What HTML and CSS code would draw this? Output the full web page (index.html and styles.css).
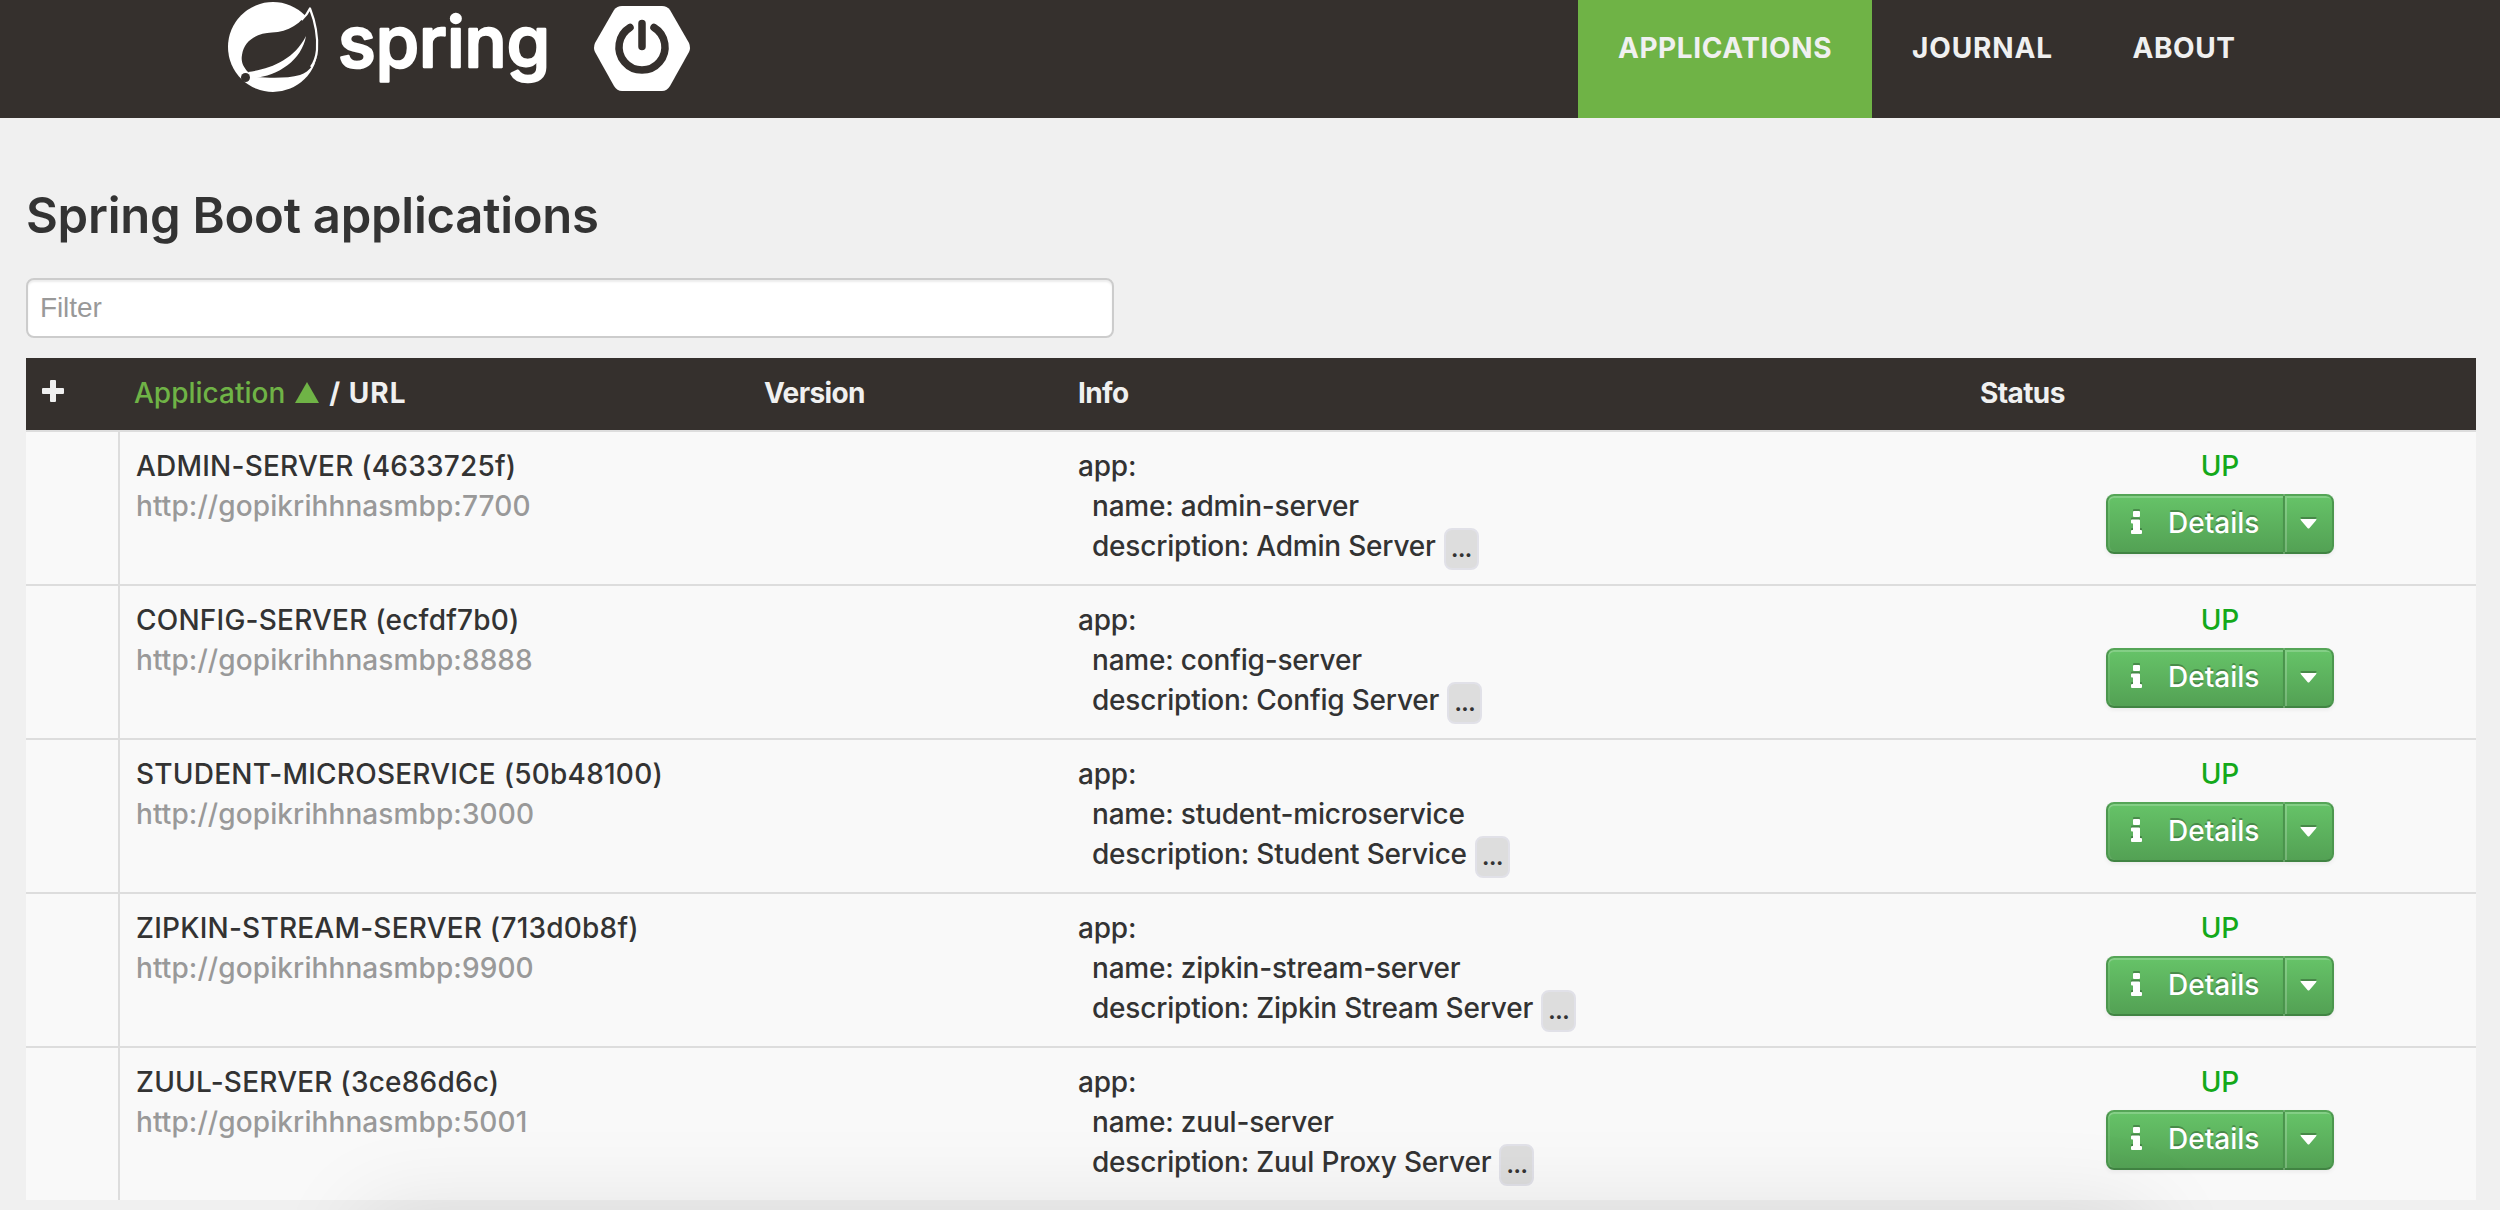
FILE: index.html
```html
<!DOCTYPE html>
<html lang="en">
<head>
<meta charset="utf-8">
<title>Spring Boot Admin</title>
<link rel="stylesheet" href="styles.css">
</head>
<body>
<svg class="sprite" width="0" height="0">
  <symbol id="icon-info" viewBox="0 0 11 23"><path d="M3 0h5q1 0 1 1v4q0 1-1 1H3q-1 0-1-1V1q0-1 1-1zM1 8.500h7q1 0 1 1V19h1q1 0 1 1v2q0 1-1 1H1q-1 0-1-1v-2q0-1 1-1h1v-6.500H1q-1 0-1-1v-2q0-1 1-1z"/></symbol>
  <symbol id="icon-caret" viewBox="0 0 16 10"><path d="M0 0h16q0 1-1 2L9 9q-1 1-2 0L1 2Q0 1 0 0z"/></symbol>
</svg>
<header class="header">
  <div class="header-inner">
    <div class="brand">
      <svg class="logo-spring" width="326" height="100" viewBox="0 0 326 100" role="img" aria-label="spring">
        <circle class="light" cx="48" cy="47" r="45"/>
        <path class="dark" d="M85 8C91 24 93 36 93 48C92 62 85 72 75 75C63 78.500 45 78 31 77L23 72C17 66 16 60 17 55C19 40 33 33 47 32.500C63 32 77 24 85 8Z"/>
        <path class="edge" d="M76.500 20Q82 15 85 8.500C91 24 93 36 92 50Q91 60 86 67"/>
        <path class="light" d="M23 72C45 69 69 60 81 36C77 60 53 76 29 78Z"/>
        <circle class="dark" cx="20.500" cy="77.500" r="4.500"/>
        <text class="wordmark" x="113" y="66.500" textLength="212" lengthAdjust="spacingAndGlyphs">spring</text>
      </svg>
      <svg class="logo-boot" width="114" height="100" viewBox="0 0 114 100">
        <path class="light" d="M37 6H77Q82 6 85 10L104 43Q106 48 104 52L85 86Q82 91 77 91H37Q32 91 29 86L10 52Q8 48 10 43L29 10Q32 6 37 6Z"/>
        <path class="power" d="M45 27.500A23 23 0 1 0 69 27.500M57 23.500V46.500"/>
      </svg>
    </div>
    <nav class="nav">
      <a class="nav-item nav-apps active">APPLICATIONS</a>
      <a class="nav-item nav-journal">JOURNAL</a>
      <a class="nav-item nav-about">ABOUT</a>
    </nav>
  </div>
</header>
<main class="content">
  <h1 class="title">Spring Boot applications</h1>
  <input class="filter" type="text" placeholder="Filter">
  <section class="table">
    <div class="row head">
      <div class="cell"><svg class="plus" width="22" height="22" viewBox="0 0 22 22"><path d="M9 0h4q1 0 1 1v7h7q1 0 1 1v4q0 1-1 1h-7v7q0 1-1 1H9q-1 0-1-1v-7H1q-1 0-1-1V9q0-1 1-1h7V1q0-1 1-1z"/></svg></div>
      <div class="cell sort"><span class="sorted">Application</span><svg class="sort-arrow" width="24" height="21" viewBox="0 0 24 21"><path d="M12 0L24 21H0z"/></svg><span class="by-url">/ URL</span></div>
      <div class="cell">Version</div>
      <div class="cell">Info</div>
      <div class="cell">Status</div>
    </div>
    <div class="row">
      <div class="cell"></div>
      <div class="cell app"><div>ADMIN-SERVER (4633725f)</div><div class="url">http://gopikrihhnasmbp:7700</div></div>
      <div class="cell"></div>
      <div class="cell info"><div>app:</div><div class="sub">name: admin-server</div><div class="sub">description: Admin Server<span class="more">...</span></div></div>
      <div class="cell status"><div class="up">UP</div><div class="group"><button class="btn details"><svg class="glyph" width="11" height="23"><use href="#icon-info"/></svg>Details</button><button class="btn drop"><svg class="glyph" width="17" height="10"><use href="#icon-caret"/></svg></button></div></div>
    </div>
    <div class="row">
      <div class="cell"></div>
      <div class="cell app"><div>CONFIG-SERVER (ecfdf7b0)</div><div class="url">http://gopikrihhnasmbp:8888</div></div>
      <div class="cell"></div>
      <div class="cell info"><div>app:</div><div class="sub">name: config-server</div><div class="sub">description: Config Server<span class="more">...</span></div></div>
      <div class="cell status"><div class="up">UP</div><div class="group"><button class="btn details"><svg class="glyph" width="11" height="23"><use href="#icon-info"/></svg>Details</button><button class="btn drop"><svg class="glyph" width="17" height="10"><use href="#icon-caret"/></svg></button></div></div>
    </div>
    <div class="row">
      <div class="cell"></div>
      <div class="cell app"><div>STUDENT-MICROSERVICE (50b48100)</div><div class="url">http://gopikrihhnasmbp:3000</div></div>
      <div class="cell"></div>
      <div class="cell info"><div>app:</div><div class="sub">name: student-microservice</div><div class="sub">description: Student Service<span class="more">...</span></div></div>
      <div class="cell status"><div class="up">UP</div><div class="group"><button class="btn details"><svg class="glyph" width="11" height="23"><use href="#icon-info"/></svg>Details</button><button class="btn drop"><svg class="glyph" width="17" height="10"><use href="#icon-caret"/></svg></button></div></div>
    </div>
    <div class="row">
      <div class="cell"></div>
      <div class="cell app"><div>ZIPKIN-STREAM-SERVER (713d0b8f)</div><div class="url">http://gopikrihhnasmbp:9900</div></div>
      <div class="cell"></div>
      <div class="cell info"><div>app:</div><div class="sub">name: zipkin-stream-server</div><div class="sub">description: Zipkin Stream Server<span class="more">...</span></div></div>
      <div class="cell status"><div class="up">UP</div><div class="group"><button class="btn details"><svg class="glyph" width="11" height="23"><use href="#icon-info"/></svg>Details</button><button class="btn drop"><svg class="glyph" width="17" height="10"><use href="#icon-caret"/></svg></button></div></div>
    </div>
    <div class="row">
      <div class="cell"></div>
      <div class="cell app"><div>ZUUL-SERVER (3ce86d6c)</div><div class="url">http://gopikrihhnasmbp:5001</div></div>
      <div class="cell"></div>
      <div class="cell info"><div>app:</div><div class="sub">name: zuul-server</div><div class="sub">description: Zuul Proxy Server<span class="more">...</span></div></div>
      <div class="cell status"><div class="up">UP</div><div class="group"><button class="btn details"><svg class="glyph" width="11" height="23"><use href="#icon-info"/></svg>Details</button><button class="btn drop"><svg class="glyph" width="17" height="10"><use href="#icon-caret"/></svg></button></div></div>
    </div>
  </section>
</main>
<div class="dock-shadow"></div>
</body>
</html>
```
FILE: styles.css
```css
* { box-sizing: border-box; }
html, body { margin: 0; height: 1210px; overflow: hidden; }
body {
  background: #f0f0f0;
  color: #333;
  font: 450 28px/40px Inter, "Liberation Sans", sans-serif;
}
.sprite { position: absolute; }

.header { height: 118px; background: #35302d; }
.header-inner { display: flex; justify-content: space-between; width: 2050px; height: 100%; margin: 0 auto; }
.brand { display: flex; }
.brand svg { display: block; overflow: visible; }
.logo-boot { margin-left: 34px; }
.light { fill: #fff; }
.dark { fill: #35302d; }
.edge { fill: none; stroke: #fff; stroke-width: 2.2; stroke-linejoin: round; }
.power { fill: none; stroke: #35302d; stroke-width: 7.5; stroke-linecap: round; }
.wordmark { font: 450 70px Inter, sans-serif; fill: #fff; stroke: #fff; stroke-width: 2.5; stroke-linejoin: round; }

.nav { display: flex; }
.nav-item { padding-top: 28px; text-align: center; color: #f0f0f0; font-weight: 700; white-space: nowrap; }
.nav-apps { width: 294px; letter-spacing: .6px; }
.nav-journal { width: 221px; letter-spacing: .9px; }
.nav-about { width: 182px; letter-spacing: .6px; }
.active { background: #6fb346; }

.content { padding: 68px 24px 0 26px; }
.title { margin: 0; height: 92px; font-size: 49px; line-height: 60px; font-weight: 600; letter-spacing: -.25px; }
.filter {
  display: block; width: 1088px; height: 60px; padding: 0 12px;
  border: 2px solid #ccc; border-radius: 8px; background: #fff;
  box-shadow: inset 0 2px 2px rgba(0,0,0,.075);
  font: 28px "Liberation Sans", Arial, sans-serif; letter-spacing: -.1px; color: #555;
}
.filter::placeholder { color: #999; opacity: 1; }

.table { margin-top: 20px; }
.row {
  display: grid; grid-template-columns: 92px 630px 314px 902px 512px;
  height: 154px; border-top: 2px solid #ddd; background: #f9f9f9;
}
.cell { padding: 14px 16px 0; white-space: nowrap; }
.head { height: 72px; border-top: 0; background: #35302d; color: #f0f0f0; font-weight: 650; letter-spacing: -.6px; }
.head .cell { padding-top: 15px; }
.plus { display: block; margin-top: 7px; fill: #f0f0f0; }
.sort { display: flex; }
.sorted { color: #6fb346; font-weight: 550; letter-spacing: 0; }
.by-url { letter-spacing: 1px; }
.sort-arrow { margin: 9px 10px 0 10px; fill: #6fb346; }
.app { border-left: 2px solid #ddd; letter-spacing: .22px; }
.url { color: #999; letter-spacing: .1px; }
.info { letter-spacing: -.2px; }
.sub { padding-left: 14px; }
.more {
  display: inline-block; height: 42px; margin: 2px 0 0 8px; padding: 0 5px;
  border: 2px solid #e1e1e8; border-radius: 8px; background: #ddd;
  font-size: 26px; line-height: 36px; vertical-align: top; letter-spacing: -.9px;
}
.info > div { height: 40px; }
.status { text-align: center; }
.up { color: #14a91a; font-weight: 500; }
.group { display: flex; justify-content: center; margin-top: 8px; }
.btn {
  display: flex; align-items: center; height: 60px; margin: 0; padding: 0;
  border: 2px solid #51a351; border-color: #55a557 #4c974e #418443;
  background: linear-gradient(#66c368, #53a154);
  color: #fff; font: 500 28px/40px Inter, sans-serif; text-shadow: 0 -2px 0 rgba(0,0,0,.25);
  box-shadow: inset 0 2px 0 rgba(255,255,255,.2), inset 2px 0 0 rgba(255,255,255,.08), 0 2px 4px rgba(0,0,0,.06);
}
.details { width: 178px; padding: 0 0 3px 23px; gap: 26px; border-radius: 8px 0 0 8px; border-right-width: 1px; }
.drop { width: 50px; padding-left: 15px; border-left-width: 1px; border-radius: 0 8px 8px 0; box-shadow: inset 2px 2px 0 rgba(255,255,255,.2), 0 2px 4px rgba(0,0,0,.06); }
.glyph { fill: #fff; filter: drop-shadow(0 -2px 0 rgba(0,0,0,.25)); }

/* soft shade along the bottom edge of the window */
.dock-shadow { position: absolute; left: 0; bottom: 0; width: 100%; height: 90px; overflow: hidden; pointer-events: none; }
.dock-shadow::before {
  content: ""; position: absolute; left: 360px; top: 90px; width: 1790px; height: 120px;
  border-radius: 20px; box-shadow: 0 0 90px rgba(0,0,0,.1);
}
```
